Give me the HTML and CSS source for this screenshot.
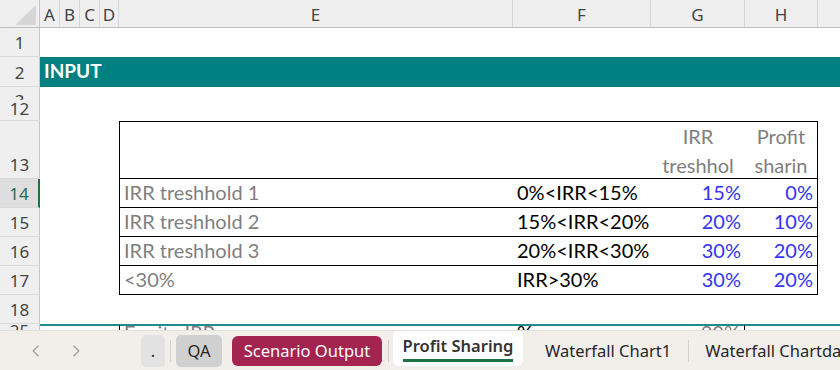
FILE: index.html
```html
<!DOCTYPE html>
<html>
<head>
<meta charset="utf-8">
<link rel="stylesheet" href="styles.css">
</head>
<body>
<div class="sheet">
  <div class="row colhdr">
    <div class="corner"><svg width="40" height="27" viewBox="0 0 40 27"><polygon points="15,25 36,25 36,5" fill="#d6d6d6"/></svg></div>
    <div class="ch">A</div><div class="ch">B</div><div class="ch">C</div><div class="ch">D</div>
    <div class="ch">E</div><div class="ch">F</div><div class="ch">G</div><div class="ch">H</div><div class="ch last"></div>
  </div>

  <div class="row h29"><div class="rh">1</div><div class="c all"></div></div>
  <div class="row h30"><div class="rh">2</div><div class="c all teal">INPUT</div></div>
  <div class="row h5"><div class="rh"></div><div class="c all"></div></div>
  <div class="row h29"><div class="rh rh12"><span class="frag3"><span>3</span></span><span>12</span></div><div class="c all"></div></div>

  <div class="row h58">
    <div class="rh">13</div>
    <div class="c ad"></div>
    <div class="c t tl tt"></div>
    <div class="c t tt"></div>
    <div class="c t tt hd"><span>IRR</span><span>treshhol</span></div>
    <div class="c t tt tr hd"><span>Profit</span><span>sharin</span></div>
    <div class="c"></div>
  </div>

  <div class="row h29">
    <div class="rh sel">14</div>
    <div class="c ad"></div>
    <div class="c t tl gray">IRR treshhold 1</div>
    <div class="c t">0%&lt;IRR&lt;15%</div>
    <div class="c t num">15%</div>
    <div class="c t tr num">0%</div>
    <div class="c"></div>
  </div>
  <div class="row h29">
    <div class="rh">15</div>
    <div class="c ad"></div>
    <div class="c t tl gray">IRR treshhold 2</div>
    <div class="c t">15%&lt;IRR&lt;20%</div>
    <div class="c t num">20%</div>
    <div class="c t tr num">10%</div>
    <div class="c"></div>
  </div>
  <div class="row h29">
    <div class="rh">16</div>
    <div class="c ad"></div>
    <div class="c t tl gray">IRR treshhold 3</div>
    <div class="c t">20%&lt;IRR&lt;30%</div>
    <div class="c t num">30%</div>
    <div class="c t tr num">20%</div>
    <div class="c"></div>
  </div>
  <div class="row h29">
    <div class="rh">17</div>
    <div class="c ad"></div>
    <div class="c t tl gray">&lt;30%</div>
    <div class="c t">IRR&gt;30%</div>
    <div class="c t num">30%</div>
    <div class="c t tr num">20%</div>
    <div class="c"></div>
  </div>
  <div class="row h29"><div class="rh">18</div><div class="c all"></div></div>

  <div class="row r25">
    <div class="rh"><span class="fragtxt hdrfrag">25</span></div>
    <div class="c ad line"></div>
    <div class="c p tl line"><span class="fragtxt gray">Equity IRR</span></div>
    <div class="c p line"><span class="fragtxt">%</span></div>
    <div class="c p gr line"><span class="fragtxt gray">30%</span></div>
    <div class="c line"></div>
    <div class="c line"></div>
  </div>
</div>

<div class="tabbar">
  <div class="nav">
    <svg width="8" height="12" viewBox="0 0 8 12"><polyline points="6.5,0.8 1.2,6 6.5,11.2" fill="none" stroke="#9c9c9c" stroke-width="1.2"/></svg>
    <svg width="8" height="12" viewBox="0 0 8 12"><polyline points="1.5,0.8 6.8,6 1.5,11.2" fill="none" stroke="#9c9c9c" stroke-width="1.2"/></svg>
  </div>
  <div class="tab dot">.</div>
  <div class="sep s1"></div>
  <div class="tab qa">QA</div>
  <div class="tab scen">Scenario Output</div>
  <div class="sep s2"></div>
  <div class="tab active"><span>Profit Sharing</span></div>
  <div class="tab plain w1">Waterfall Chart1</div>
  <div class="sep s3"></div>
  <div class="tab plain w2">Waterfall Chartdata</div>
</div>
</body>
</html>
```

FILE: styles.css
```css
* { box-sizing: border-box; margin: 0; padding: 0; }
body {
  width: 840px;
  height: 370px;
  overflow: hidden;
  background: #fff;
  font-family: Lato, "Liberation Sans", sans-serif;
}
.sheet { height: 330px; overflow: hidden; }
.row {
  display: grid;
  grid-template-columns: 40px 20px 20px 20px 19px 394px 138px 94px 73px 22px;
}
.h29 { height: 29px; }
.h30 { height: 30px; }
.h5 { height: 5px; }
.h58 { height: 58px; }

/* column header */
.colhdr {
  height: 28px;
  background: #efefef;
  border-bottom: 1px solid #bdbdbd;
}
.corner { border-right: 1px solid #c6c6c6; }
.corner svg { display: block; }
.ch {
  border-right: 1px solid #d6d6d6;
  text-align: center;
  font-family: "Noto Sans", sans-serif;
  font-size: 17px;
  line-height: 25px;
  padding-top: 2px;
  color: #444;
}
.ch.last { border-right: none; }

/* row header */
.rh {
  background: #efefef;
  border-right: 1px solid #c6c6c6;
  border-bottom: 1px solid #dadada;
  display: flex;
  align-items: flex-end;
  justify-content: center;
  font-family: "Noto Sans", sans-serif;
  font-size: 17px;
  line-height: 17px;
  padding-bottom: 5px;
  color: #444;
  overflow: hidden;
}
.rh.sel {
  background: #dedede;
  border-right: 2px solid #1e7145;
  color: #1e6b4f;
}
.rh12 {
  flex-direction: column;
  align-items: center;
  justify-content: flex-start;
  padding-top: 3px;
  padding-bottom: 0;
}
.frag3 { display: block; height: 5px; overflow: hidden; }
.frag3 span { display: block; margin-top: -3px; }

/* cells */
.c {
  display: flex;
  align-items: flex-end;
  white-space: nowrap;
  overflow: hidden;
  font-size: 20px;
  line-height: 20px;
  padding: 0 4px 5px;
  color: #000;
}
.all { grid-column: 2 / -1; }
.ad { grid-column: 2 / 6; }
.teal {
  background: #008080;
  color: #fff;
  font-weight: 700;
  font-size: 19px;
  padding-bottom: 6px;
  padding-left: 4px;
}
.t { border-bottom: 1px solid #000; }
.tl { border-left: 1px solid #000; }
.tr { border-right: 1px solid #000; }
.tt { border-top: 1px solid #000; }
.gray { color: #7f7f7f; }
.num { justify-content: flex-end; color: #3333f2; padding-right: 4px; }
.hd {
  flex-direction: column;
  align-items: center;
  justify-content: flex-start;
  color: #7f7f7f;
  line-height: 29px;
  padding: 0;
}
.hd span { display: block; }

/* partial row 25 */
.r25 { height: 6px; }
.r25 .rh { border-bottom: none; padding: 0; align-items: flex-start; }
.line { border-top: 2px solid #1f8d8d; }
.r25 .c { padding: 0 4px; align-items: flex-start; }
.r25 .p.tl { border-left: 1px solid #000; }
.r25 .gr { border-right: 1px solid #000; justify-content: flex-end; }
.fragtxt { display: block; margin-top: -4px; line-height: 20px; }
.hdrfrag { font-size: 17px; margin-top: -2px; line-height: 17px; }

/* tab bar */
.tabbar {
  height: 40px;
  background: #f2efeb;
  border-top: 1px solid #e4e1dd;
  display: flex;
  align-items: center;
  font-family: "Noto Sans", sans-serif;
  font-size: 16.5px;
  color: #262626;
  white-space: nowrap;
  overflow: hidden;
}
.nav {
  width: 141px;
  flex: none;
  display: flex;
  align-items: center;
  gap: 32px;
  padding-left: 32px;
}
.nav svg { display: block; }
.tab {
  flex: none;
  display: flex;
  align-items: center;
  justify-content: center;
  border-radius: 5px;
}
.dot { width: 24px; height: 32px; background: #e2e2e2; }
.qa { width: 46px; height: 32px; background: #d0d0d0; margin-right: 10px; }
.scen { width: 150px; height: 30px; background: #a2244f; color: #fff; border-radius: 6px; }
.sep { flex: none; width: 1px; height: 22px; background: #d3d0cc; }
.s1 { margin: 0 5px; }
.s2 { margin: 0 4px 0 6px; }
.s3 { margin: 0 16px 0 17px; }
.active {
  width: 130px;
  height: 36px;
  align-self: flex-start;
  margin-top: -1px;
  background: #fff;
  border-radius: 6px;
  flex-direction: column;
  font-weight: 600;
  color: #333;
}
.active span {
  display: block;
  line-height: 23px;
  padding-bottom: 2px;
  border-bottom: 3px solid #1e7145;
}
.w1 { margin-left: 22px; }
```
